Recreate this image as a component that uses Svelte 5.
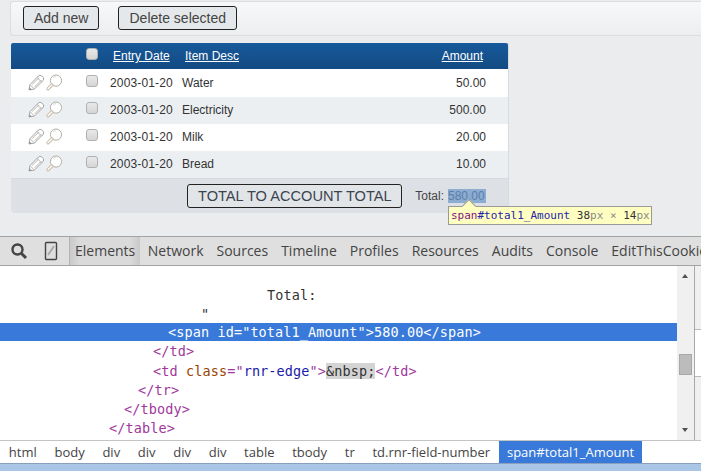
<script>
	const rows = [
		{ date: '2003-01-20', desc: 'Water', amount: '50.00' },
		{ date: '2003-01-20', desc: 'Electricity', amount: '500.00' },
		{ date: '2003-01-20', desc: 'Milk', amount: '20.00' },
		{ date: '2003-01-20', desc: 'Bread', amount: '10.00' }
	];
	const tabs = ['Network', 'Sources', 'Timeline', 'Profiles', 'Resources', 'Audits', 'Console', 'EditThisCookie'];
	const crumbs = ['html', 'body', 'div', 'div', 'div', 'div', 'table', 'tbody', 'tr', 'td.rnr-field-number'];
</script>

<div class="page">
	<div class="toolbar">
		<button class="btn">Add new</button>
		<button class="btn">Delete selected</button>
	</div>

	<div class="grid">
		<div class="row head">
			<span></span>
			<span class="check"></span>
			<a href="#date">Entry Date</a>
			<a href="#desc">Item Desc</a>
			<a class="num" href="#amount">Amount</a>
		</div>
		{#each rows as r, i}
			<div class="row" class:alt={i % 2 === 1} class:first={i === 0}>
				<span class="icons">
					<svg width="17" height="17" viewBox="0 0 17 17" fill="none" stroke-linejoin="round">
						<path d="M1 16 L2 10.6 L10.4 2 Q11.9 0.6 13.6 1.8 L15.2 3.4 Q16.4 5 15 6.6 L6.4 15 Z" fill="#fff" stroke="#a0a5aa" />
						<path d="M2 10.6 L6.4 15 M9 3.4 L13.6 8 M4.2 10.4 L11.2 3.6 M6.6 12.8 L13.4 6" stroke="#bdb5ac" />
						<path d="M1 16 L1.6 13.2 L3.8 15.4 Z" fill="#8f959b" />
					</svg>
					<svg width="17" height="17" viewBox="0 0 17 17" fill="none">
						<circle cx="10" cy="6.6" r="5.6" fill="#fff" stroke="#b3afa6" />
						<path d="M5.8 11 L2 14.8" stroke="#c9b6a4" stroke-width="3.2" stroke-linecap="round" />
						<path d="M5.8 11 L2 14.8" stroke="#fff" stroke-width="1.4" stroke-linecap="round" />
						<path d="M7 4 Q8.2 2.6 10.2 2.6" stroke="#dcdcdc" />
					</svg>
				</span>
				<span class="check"></span>
				<span class="date">{r.date}</span>
				<span>{r.desc}</span>
				<span class="num">{r.amount}</span>
			</div>
		{/each}
		<div class="foot">
			<button class="btn total-btn">TOTAL TO ACCOUNT TOTAL</button>
			<span class="total-label">Total:</span>
			<span class="hilite">580.00</span>
			<div class="tip">
				<span class="tip-tag">span</span><span class="tip-id">#total1_Amount</span>
				<b>38</b>px × <b>14</b>px
			</div>
		</div>
	</div>
</div>

<div class="devtools">
	<div class="tabs">
		<svg class="search" width="18" height="18" viewBox="0 0 18 18" fill="none" stroke="#444">
			<circle cx="7.5" cy="7.5" r="5" stroke-width="2.4" />
			<path d="M11.5 11.5 L16 16" stroke-width="3" />
		</svg>
		<svg class="device" width="14" height="20" viewBox="0 0 14 20" fill="none">
			<rect x="1.5" y="1.5" width="11" height="17" rx="1" stroke="#444" stroke-width="1.4" />
			<path d="M4 14 L10 5" stroke="#aaa" stroke-width="2" />
		</svg>
		<span class="tab active">Elements</span>
		{#each tabs as t}
			<span class="tab">{t}</span>
		{/each}
	</div>

	<div class="main">
		<div class="code">
			<div class="ln" style="padding-left:267px">Total:</div>
			<div class="ln quote" style="padding-left:201px">"</div>
			<div class="ln sel" style="padding-left:168px">&lt;span id="total1_Amount"&gt;580.00&lt;/span&gt;</div>
			<div class="ln tag close-td" style="padding-left:153px">&lt;/td&gt;</div>
			<div class="ln tag" style="padding-left:153px">&lt;td <span class="attr">class</span>="<span class="val">rnr-edge</span>"&gt;<span class="nbsp">&amp;nbsp;</span>&lt;/td&gt;</div>
			<div class="ln tag" style="padding-left:138px">&lt;/tr&gt;</div>
			<div class="ln tag" style="padding-left:124px">&lt;/tbody&gt;</div>
			<div class="ln tag" style="padding-left:109px">&lt;/table&gt;</div>
		</div>
		<div class="scroll">
			<span class="arrow up"></span>
			<span class="thumb"></span>
			<span class="arrow down"></span>
		</div>
		<div class="side">
			<div class="side-a"></div>
			<div class="side-b"></div>
			<div class="side-a"></div>
		</div>
	</div>

	<div class="crumbs">
		{#each crumbs as c}
			<span class="crumb">{c}</span>
		{/each}
		<span class="crumb on">span#total1_Amount</span>
	</div>
</div>
<div class="taskbar"></div>

<style>
	:global(body) {
		background: #fff;
		font-family: 'Liberation Sans', Arial, sans-serif;
		overflow: hidden;
	}

	.page {
		height: 236px;
		box-sizing: border-box;
		background: #ebecee;
		padding: 1px 0 0 10px;
		position: relative;
	}

	.toolbar {
		height: 35px;
		box-sizing: border-box;
		display: flex;
		align-items: center;
		gap: 19px;
		padding: 0 0 2px 12px;
		background: linear-gradient(#f7f8f9, #eceef0);
		border: 1px solid #dcdddf;
		border-right: none;
		border-radius: 3px 0 0 3px;
	}

	.btn {
		height: 24px;
		padding: 0 10px;
		border: 1px solid #222;
		border-radius: 3px;
		background: #e5e8ea;
		color: #444;
		font: 14px 'Liberation Sans', Arial, sans-serif;
	}

	.grid {
		width: 498px;
		margin: 7px 0 0 1px;
		box-sizing: border-box;
		border-right: 1px solid #d8dce0;
		color: #333;
		font-size: 12px;
		position: relative;
	}

	.row {
		height: 27px;
		box-sizing: border-box;
		display: grid;
		grid-template-columns: 75px 24px 72px 1fr auto;
		align-items: center;
		padding: 0 22px 1px 0;
		background: #fff;
	}

	.row.first {
		height: 28px;
		padding-bottom: 0;
	}

	.row.alt {
		background: #eceff2;
	}

	.row.head {
		height: 26px;
		background: linear-gradient(#17599b, #134b82);
		border-radius: 2px 2px 0 0;
		padding: 0 25px 0 0;
		grid-template-columns: 75px 27px 72px 1fr auto;
	}

	.head a {
		color: #fff;
		text-decoration: underline;
	}

	.date {
		letter-spacing: 0.15px;
	}

	.num {
		text-align: right;
	}

	.check {
		width: 12px;
		height: 12px;
		box-sizing: border-box;
		border: 1px solid #aeb0b2;
		border-radius: 3px;
		background: linear-gradient(#e9e9e9, #d5d5d5);
		margin-top: -4px;
	}

	.icons {
		display: flex;
		gap: 1px;
		padding-left: 17px;
		margin-top: -2px;
	}

	.foot {
		height: 35px;
		box-sizing: border-box;
		background: #dde1e5;
		border-top: 1px solid #d6dade;
		border-radius: 0 0 4px 4px;
		display: flex;
		align-items: center;
		justify-content: flex-end;
		padding-right: 22px;
		position: relative;
	}

	.total-btn {
		height: 24px;
		padding: 0;
		width: 215px;
		margin-right: 13px;
		color: #3b4350;
		background: #e2e5e8;
		margin-top: -1px;
		font-size: 14.6px;
	}

	.total-label {
		margin-right: 4px;
		color: #444;
		margin-top: -1px;
	}

	.hilite {
		width: 38px;
		height: 14px;
		line-height: 14px;
		background: #8cacd2;
		color: #5d7ea8;
		margin-top: -1px;
	}

	.tip {
		position: absolute;
		left: 437px;
		top: 27px;
		height: 19px;
		width: 204px;
		box-sizing: border-box;
		padding-left: 2px;
		background: #ffffc2;
		border: 1px solid #9a9a9a;
		font: 11px/17px 'DejaVu Sans Mono', monospace;
		color: #888;
		white-space: nowrap;
	}

	.tip::before {
		content: '';
		position: absolute;
		left: 15px;
		top: -6px;
		width: 9px;
		height: 9px;
		background: #ffffc2;
		border-left: 1px solid #9a9a9a;
		border-top: 1px solid #9a9a9a;
		transform: rotate(45deg);
		transform-origin: center;
	}

	.tip b {
		font-weight: normal;
		color: #333;
	}

	.tip-tag {
		color: #881280;
		position: relative;
	}

	.tip-id {
		color: #2424a8;
		position: relative;
	}

	.devtools {
		height: 227px;
		display: flex;
		flex-direction: column;
	}

	.tabs {
		height: 30px;
		flex: none;
		box-sizing: border-box;
		display: flex;
		align-items: center;
		background: #dfdfdf;
		border-top: 1px solid #a3a3a3;
		border-bottom: 1px solid #a3a3a3;
		font: 14px 'Open Sans', sans-serif;
		color: #444;
		white-space: nowrap;
		overflow: hidden;
		padding-left: 10px;
	}

	.tabs svg,
	.tab {
		flex: none;
	}

	.device {
		margin-left: 16px;
		margin-right: 11px;
	}

	.tab {
		height: 28px;
		line-height: 28px;
		padding: 0 6.5px;
	}

	.active {
		background: linear-gradient(90deg, #c9c9c9, #dadada 14%, #dadada 86%, #c9c9c9);
		border-left: 1px solid #b4b4b4;
		padding: 0 5px;
		margin-right: 1px;
	}

	.main {
		flex: 1;
		min-height: 0;
		display: flex;
	}

	.code {
		flex: 1;
		min-width: 0;
		overflow: hidden;
		padding-top: 20px;
		background: #fff;
		font: 13.5px/19px 'DejaVu Sans Mono', monospace;
		letter-spacing: 0.11px;
		color: #333;
	}

	.ln {
		height: 19px;
		white-space: pre;
	}

	.quote {
		height: 18px;
	}

	.sel {
		height: 18px;
		line-height: 18px;
		margin-bottom: 1px;
		background: #3879d9;
		color: #fff;
	}

	.close-td {
		height: 20px;
	}

	.tag {
		color: #a0379c;
	}

	.attr {
		color: #994500;
	}

	.val {
		color: #1a1aa6;
	}

	.nbsp {
		background: #d4d4d4;
		color: #333;
	}

	.scroll {
		width: 17px;
		flex: none;
		background: #f0f0f0;
		position: relative;
	}

	.thumb {
		position: absolute;
		left: 2px;
		top: 88px;
		width: 13px;
		height: 21px;
		box-sizing: border-box;
		background: #bcbcbc;
		border: 1px solid #a8a8a8;
	}

	.arrow {
		position: absolute;
		left: 5px;
		border-left: 3.5px solid transparent;
		border-right: 3.5px solid transparent;
	}

	.up {
		top: 8px;
		border-bottom: 4px solid #505050;
	}

	.down {
		bottom: 8px;
		border-top: 4px solid #505050;
	}

	.side {
		width: 6px;
		flex: none;
		border-left: 1px solid #a8a8a8;
		display: flex;
		flex-direction: column;
	}

	.side-a {
		flex: 1;
		background: #f0f0f0;
	}

	.side-b {
		height: 46px;
		background: #fff;
		border-top: 1px solid #bbb;
		border-bottom: 1px solid #bbb;
	}

	.crumbs {
		height: 23px;
		flex: none;
		box-sizing: border-box;
		display: flex;
		align-items: center;
		background: #fff;
		border-top: 1px solid #c4c4c4;
		font: 13px 'Open Sans', sans-serif;
		color: #444;
		white-space: nowrap;
	}

	.crumb {
		padding: 0 8.85px;
		line-height: 22px;
	}

	.crumb.on {
		background: #3879d9;
		color: #fff;
		padding: 0 8px;
	}

	.taskbar {
		height: 8px;
		background: #aac6e6;
		border-top: 1px solid #8a9fc0;
	}
</style>
